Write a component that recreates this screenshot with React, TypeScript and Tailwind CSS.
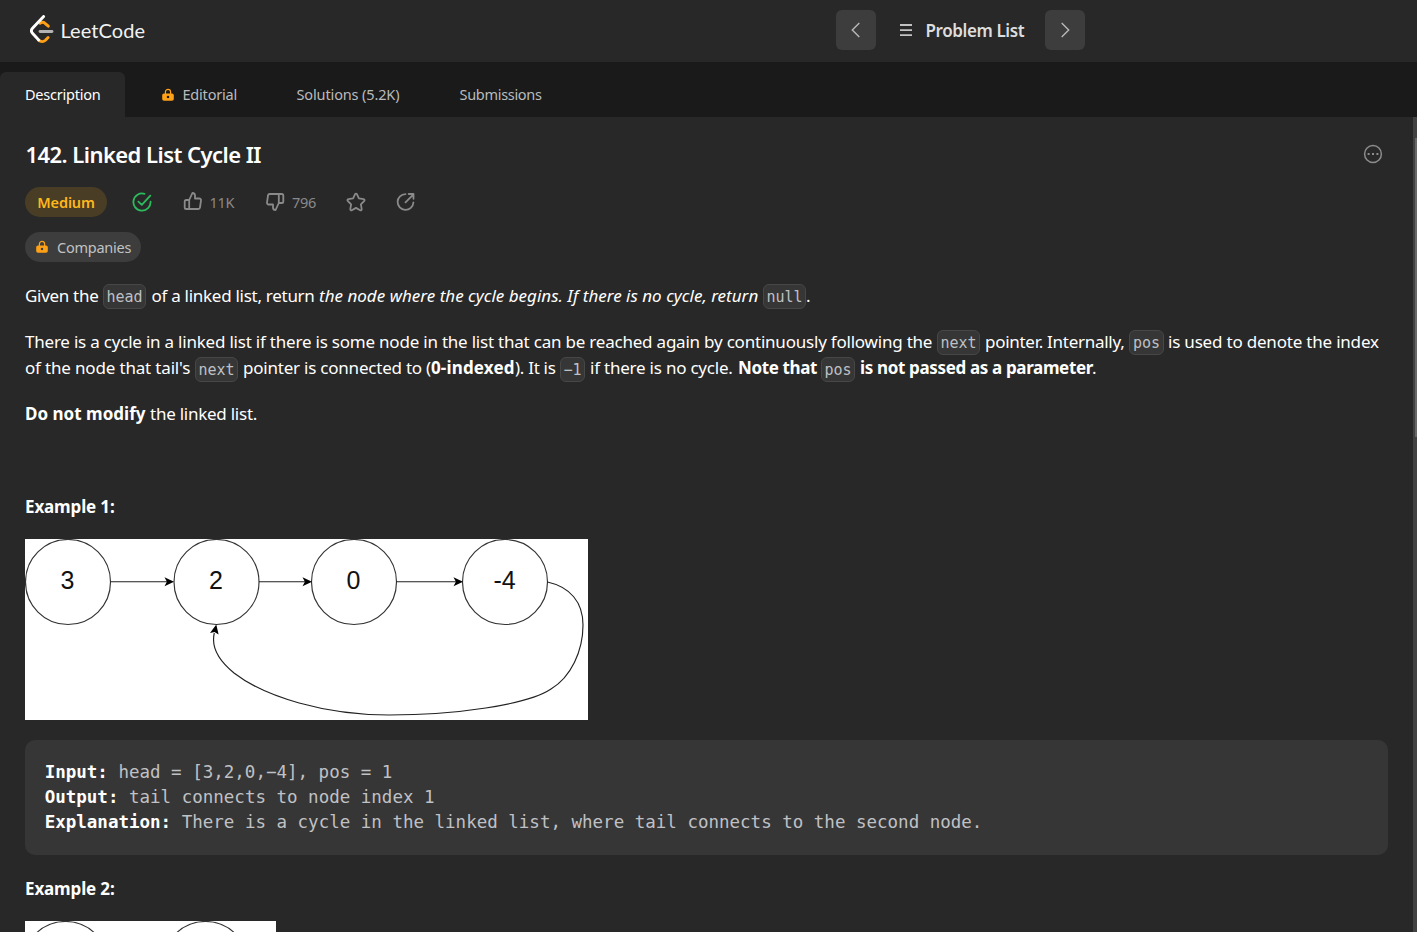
import type { ReactNode } from "react";

function Logo() {
  return (
    <svg className="h-[28px] w-[24px]" viewBox="0 0 24 28" fill="none" strokeLinecap="round" strokeLinejoin="round">
      <path d="M10 8.200c1.700-1.200 3.700-1.100 5 .1l3.300 2.900" stroke="#ffa116" strokeWidth="2.900" />
      <path d="M8.600 25.200c2 1.700 5 1.700 6.800 0l2.700-2.700" stroke="#ffa116" strokeWidth="2.900" />
      <path d="M13.600 1.500 2.500 13.300c-1.400 1.500-1.400 3.400 0 4.900l6.200 6.700" stroke="#fff" strokeWidth="2.900" />
      <path d="M10 16.500h12" stroke="#b3b3b3" strokeWidth="2.800" />
    </svg>
  );
}

function Lock() {
  return (
    <svg className="h-[14px] w-[14px] shrink-0" viewBox="0 0 14 14" fill="none">
      <path d="M4.400 6V4a2.600 2.600 0 0 1 5.200 0V6" stroke="#ffa116" strokeWidth="1.200" />
      <path fillRule="evenodd" clipRule="evenodd" d="M3 5.400h8a1.800 1.800 0 0 1 1.800 1.800V11A1.800 1.800 0 0 1 11 12.800H3A1.800 1.800 0 0 1 1.200 11V7.200A1.800 1.800 0 0 1 3 5.400Zm4 2.400a1.250 1.250 0 1 0 0 2.500 1.250 1.250 0 0 0 0-2.500Z" fill="#ffa116" />
    </svg>
  );
}

function Icon({ children, className = "" }: { children: ReactNode; className?: string }) {
  return (
    <svg className={`h-5 w-5 shrink-0 ${className}`} viewBox="0 0 20 20" fill="none" stroke="currentColor" strokeWidth="1.8" strokeLinejoin="round" strokeLinecap="round">
      {children}
    </svg>
  );
}

const thumb =
  "M6.200 9 9.400 2c1.500 0 2.600 1.100 2.600 2.600V7.500h4.400c1 0 1.800.9 1.600 1.900l-1 7.100c-.1.900-.8 1.500-1.700 1.500H3.300c-.9 0-1.600-.7-1.600-1.600v-5.800C1.700 9.700 2.400 9 3.300 9h2.900v9";

function Code({ children, className = "" }: { children: ReactNode; className?: string }) {
  return (
    <code className={`flex h-[25px] items-center justify-center rounded-[6px] border border-[#474747] bg-[#363636] pt-[2px] font-['DejaVu_Sans_Mono',monospace] text-[15px] leading-none text-[#bfc0c4] ${className}`}>
      {children}
    </code>
  );
}

function Line({ children, className = "" }: { children: ReactNode; className?: string }) {
  return <div className={`flex h-[26px] items-center whitespace-nowrap ${className}`}>{children}</div>;
}

function Node({ x, label }: { x: number; label: string }) {
  return (
    <g>
      <circle cx={x} cy="43" r="42.500" fill="none" stroke="#333" strokeWidth="1.150" />
      <text x={x - 0.5} y="49.500" textAnchor="middle" fontSize="25" fill="#111" fontFamily="Liberation Sans, sans-serif">
        {label}
      </text>
    </g>
  );
}

function CycleDiagram() {
  return (
    <svg className="mt-[19px] block h-[181px] w-[563px] bg-white" viewBox="0 0 563 181">
      <Node x={43} label="3" />
      <Node x={191.5} label="2" />
      <Node x={329} label="0" />
      <Node x={480} label="-4" />
      <g stroke="#222" strokeWidth="1.150" fill="none">
        <path d="M85.500 42.700H142M234 42.700H280M371.500 42.700H431" />
        <path d="M522.500 43C545 48 558 63 558 86C558 112 546 138 526 150C502 166 430 176 364 176C300 176 240 158 209 134C193 121 186 108 189.300 94" />
      </g>
      <g fill="#000">
        <path d="M149 42.700l-9.500-4.500 2.400 4.500-2.400 4.500z" />
        <path d="M287 42.700l-9.500-4.500 2.400 4.500-2.400 4.500z" />
        <path d="M438 42.700l-9.500-4.500 2.400 4.500-2.400 4.500z" />
        <path d="M191.300 85.500l-6.300 8.500 4.500-1 4.100 2.500z" />
      </g>
    </svg>
  );
}

export default function App() {
  return (
    <div className="flex h-[932px] w-[1417px] flex-col overflow-hidden bg-[#282828] font-['Noto_Sans',sans-serif] text-white">
      <header className="flex h-[62px] shrink-0 items-center">
        <div className="mb-[4px] flex w-[835.500px] items-center pl-[29.500px]">
          <Logo />
          <span className="mt-px ml-[7px] font-['Lato',sans-serif] text-[20px] leading-none tracking-[0.07px] text-[#f2f2f2]">LeetCode</span>
        </div>
        <div className="mb-[2px] flex items-center">
          <button className="flex h-10 w-10 items-center justify-center rounded-[6px] bg-[#3d3d3d] text-[#b8b8b8]">
            <svg className="h-5 w-5" viewBox="0 0 20 20" fill="none" stroke="currentColor" strokeWidth="1.400">
              <path d="M13.300 3 6.300 10l7 7" />
            </svg>
          </button>
          <svg className="ml-[23px] h-[14px] w-[14px] text-[#c2c2c2]" viewBox="0 0 14 14" stroke="currentColor" strokeWidth="1.800">
            <path d="M1 2h12M1 7.200h12M1 12.200h12" />
          </svg>
          <span className="mt-[2px] ml-[13px] w-[118px] whitespace-nowrap text-[17px] leading-[22px] font-semibold tracking-[-0.4px] text-[#dddddd]">Problem List</span>
          <button className="ml-px flex h-10 w-10 items-center justify-center rounded-[6px] bg-[#3d3d3d] text-[#b8b8b8]">
            <svg className="h-5 w-5" viewBox="0 0 20 20" fill="none" stroke="currentColor" strokeWidth="1.400">
              <path d="M6.700 3l7 7-7 7" />
            </svg>
          </button>
        </div>
      </header>

      <nav className="flex h-[55px] shrink-0 bg-[#1a1a1a] pt-[10px] text-[14.5px] whitespace-nowrap text-[#b9bbbd]">
        <div className="flex w-[125px] items-center rounded-t-[6px] bg-[#282828] pl-[25px] tracking-[-0.24px] text-white">Description</div>
        <div className="flex w-[171.500px] items-center pl-[35.500px]">
          <Lock />
          <span className="ml-[8px] tracking-[-0.2px]">Editorial</span>
        </div>
        <div className="flex w-[163px] items-center tracking-[-0.13px]">Solutions (5.2K)</div>
        <div className="flex items-center tracking-[-0.3px]">Submissions</div>
      </nav>

      <div className="flex min-h-0 flex-1">
        <main className="w-[1413px] shrink-0 overflow-hidden pr-[25px] pl-[25px]">
          <div className="flex h-[70px] items-center justify-between pt-[5px]">
            <h1 className="mb-[2px] pl-[0.500px] text-[22px] leading-[28px] font-semibold tracking-[-0.550px] whitespace-nowrap">142. Linked List Cycle II</h1>
            <svg className="mr-[5px] mb-[2px] h-5 w-5 text-[#8c8c8c]" viewBox="0 0 20 20" fill="none" stroke="currentColor" strokeWidth="1.500">
              <circle cx="10" cy="10" r="8.400" />
              <path d="M4.600 10h2M9 10h2M13.400 10h2" strokeWidth="1.800" />
            </svg>
          </div>

          <div className="flex h-[30px] items-center text-[#8a8a8a]">
            <span className="flex h-[30px] w-[82px] items-center justify-center rounded-full bg-[#493d25] pt-px text-[14.5px] font-semibold tracking-[-0.15px] text-[#ffb71b]">Medium</span>
            <Icon className="-mt-px ml-[25px] text-[#2cbb5d]">
              <path d="M12.500 1.800A8.600 8.600 0 1 0 18.600 9.600M6.400 9.600l3.400 3.300L18.300 3.600" />
            </Icon>
            <Icon className="ml-[31px] -mt-[2px]">
              <path d={thumb} />
            </Icon>
            <span className="mt-px ml-[6.500px] w-[25.500px] text-[14.500px] tracking-[-0.3px]">11K</span>
            <Icon className="ml-[30px] rotate-180">
              <path d={thumb} />
            </Icon>
            <span className="mt-px ml-[7px] w-[25px] text-[14.500px] tracking-[-0.3px]">796</span>
            <Icon className="-mt-px ml-[29px]">
              <path d="M9.100 2.100a1 1 0 0 1 1.800 0l2 4.300 4.800.7a1 1 0 0 1 .6 1.700l-3.400 3.500.8 4.900a1 1 0 0 1-1.500 1L10 15.900l-4.200 2.300a1 1 0 0 1-1.500-1l.8-4.900L1.700 8.800a1 1 0 0 1 .6-1.700l4.800-.7z" />
            </Icon>
            <Icon className="ml-[30px]">
              <path d="M9.500 2.100A7.900 7.900 0 1 0 17.400 10.500M9.500 10.300l7.700-7.700M12.700 2h4.800v4.800" />
            </Icon>
          </div>

          <div className="mt-[15px] flex h-[30px] w-[116px] items-center rounded-full bg-[#3d3d3d] pl-[10px] text-[14.5px] tracking-[-0.25px] text-[#c0c2c4]">
            <Lock />
            <span className="mt-px ml-[8px]">Companies</span>
          </div>

          <div className="mt-[21px] text-[17px] leading-[26px]">
            <Line>
              <span className="w-[78px] tracking-[-0.3px]">Given the</span>
              <Code className="w-[43px]">head</Code>
              <span className="ml-[5.500px] w-[167.500px] tracking-[-0.28px]">of a linked list, return</span>
              <em className="w-[444px] tracking-[0.01px]">the node where the cycle begins. If there is no cycle, return</em>
              <Code className="w-[43px]">null</Code>
              <span>.</span>
            </Line>
            <Line className="mt-[20px]">
              <span className="w-[912px] tracking-[-0.214px]">
                There is a cycle in a linked list if there is some node in the list that can be reached again by continuously following the
              </span>
              <Code className="w-[43px]">next</Code>
              <span className="ml-[5px] w-[144px] tracking-[-0.28px]">pointer. Internally,</span>
              <Code className="w-[35px]">pos</Code>
              <span className="ml-[4px] tracking-[-0.2px]">is used to denote the index</span>
            </Line>
            <Line>
              <span className="w-[170px] tracking-[-0.17px]">of the node that tail's</span>
              <Code className="mt-[3px] w-[43px]">next</Code>
              <span className="ml-[5px] w-[188px] tracking-[-0.22px]">pointer is connected to (</span>
              <b className="w-[84px] tracking-[0.15px]">0-indexed</b>
              <span className="w-[45px] tracking-[-0.3px]">). It is</span>
              <Code className="mt-[3px] w-[25px]">−1</Code>
              <span className="ml-[5px] w-[148px] tracking-[-0.22px]">if there is no cycle.</span>
              <b className="w-[83px] tracking-[-0.36px]">Note that</b>
              <Code className="mt-[3px] w-[34px]">pos</Code>
              <b className="ml-[5px] w-[232px] tracking-[-0.35px]">is not passed as a parameter</b>
              <span>.</span>
            </Line>
            <Line className="mt-[20px]">
              <b className="w-[125px] tracking-[0.02px]">Do not modify</b>
              <span className="tracking-[-0.25px]">the linked list.</span>
            </Line>
            <Line className="mt-[67px]">
              <b className="tracking-[-0.14px]">Example 1:</b>
            </Line>
          </div>

          <CycleDiagram />

          <pre className="mt-[20px] h-[115px] rounded-[10px] bg-[#363636] pt-[20px] pl-[19.700px] font-['DejaVu_Sans_Mono',monospace] text-[17.5px] leading-[25px] text-[#c0c1c5]">
            <b className="text-white">Input:</b> head = [3,2,0,−4], pos = 1{"\n"}
            <b className="text-white">Output:</b> tail connects to node index 1{"\n"}
            <b className="text-white">Explanation:</b> There is a cycle in the linked list, where tail connects to the second node.
          </pre>

          <Line className="mt-[21px] text-[17px]">
            <b className="tracking-[-0.14px]">Example 2:</b>
          </Line>
          <svg className="mt-[19px] block h-[181px] w-[251px] bg-white" viewBox="0 0 251 181">
            <circle cx="40.500" cy="43" r="42.500" fill="none" stroke="#333" strokeWidth="1.150" />
            <circle cx="180.500" cy="43" r="42.500" fill="none" stroke="#333" strokeWidth="1.150" />
          </svg>
        </main>
        <div className="flex w-[4px] flex-col items-end bg-[#424242] pt-[21px]">
          <div className="h-[299px] w-[2px] bg-[#686868]" />
        </div>
      </div>
    </div>
  );
}
